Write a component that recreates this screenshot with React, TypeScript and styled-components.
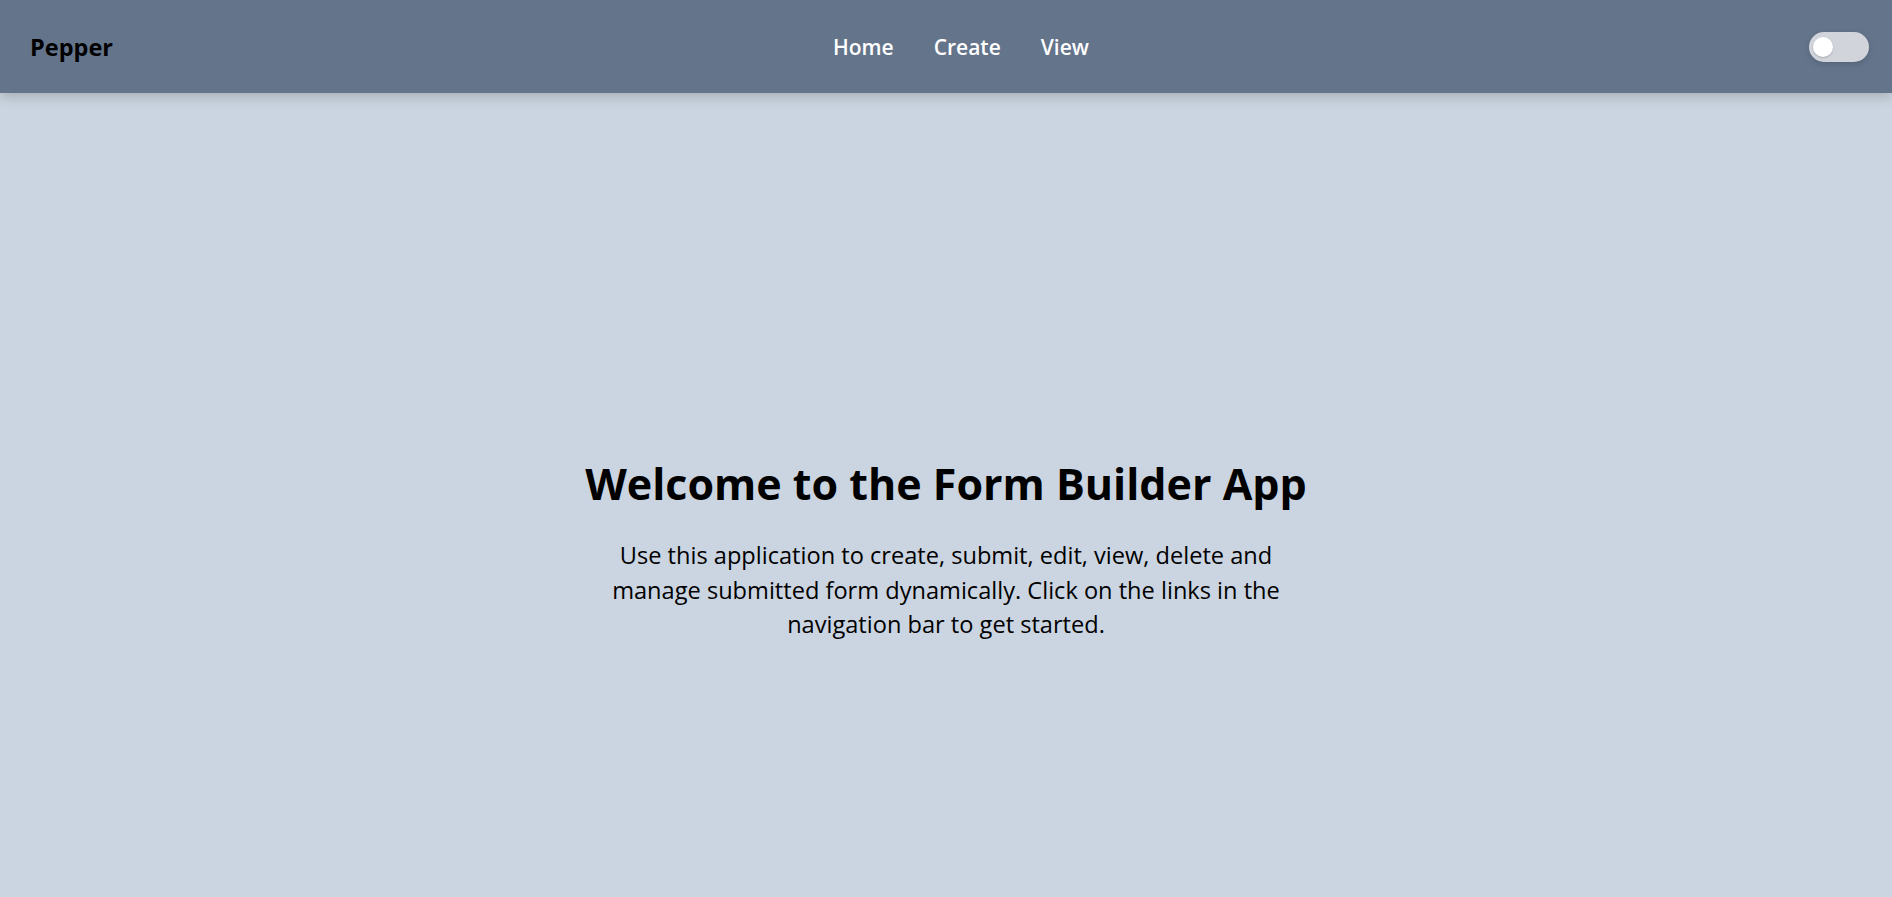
import React, { useState } from "react";
import styled, { createGlobalStyle } from "styled-components";

const GlobalStyle = createGlobalStyle`
  * { box-sizing: border-box; }
  html, body { margin: 0; padding: 0; }
  body {
    background: #cbd5e1;
    font-family: "Segoe UI", "Open Sans", "Noto Sans", sans-serif;
    color: #000;
  }
`;

const Header = styled.header`
  position: relative;
  z-index: 2;
  height: 93px;
  background: #64748b;
  display: flex;
  align-items: center;
  justify-content: space-between;
  padding: 0 23px 0 30px;
  box-shadow: 0 4px 12px rgba(0, 0, 0, 0.18);
`;

const Brand = styled.div`
  font-size: 23.5px;
  font-weight: 700;
  color: #000;
`;

const Nav = styled.nav`
  display: flex;
  gap: 40px;
`;

const NavLink = styled.a`
  font-size: 21px;
  font-weight: 600;
  color: #fff;
  text-decoration: none;
  cursor: pointer;
`;

const Track = styled.button<{ $on: boolean }>`
  width: 60px;
  height: 30px;
  border: none;
  border-radius: 15px;
  padding: 5px 4px;
  background: ${(p) => (p.$on ? "#334155" : "#d1d5db")};
  box-shadow: 0 2px 6px rgba(0, 0, 0, 0.15);
  display: flex;
  justify-content: ${(p) => (p.$on ? "flex-end" : "flex-start")};
  cursor: pointer;
`;

const Knob = styled.span`
  width: 20px;
  height: 20px;
  border-radius: 50%;
  background: #fff;
  box-shadow: 0 1px 2px rgba(0, 0, 0, 0.2);
`;

const Main = styled.main`
  min-height: 100vh;
  padding-top: 15px;
  display: flex;
  flex-direction: column;
  align-items: center;
  justify-content: center;
  text-align: center;
`;

const Title = styled.h1`
  margin: 0 0 27px;
  font-size: 43px;
  line-height: 55px;
  font-weight: 700;
`;

const Lead = styled.p`
  margin: 0;
  max-width: 705px;
  font-size: 23.6px;
  line-height: 34.5px;
  font-weight: 400;
`;

export default function App() {
  const [on, setOn] = useState(false);
  return (
    <>
      <GlobalStyle />
      <Header>
        <Brand>Pepper</Brand>
        <Nav>
          <NavLink>Home</NavLink>
          <NavLink>Create</NavLink>
          <NavLink>View</NavLink>
        </Nav>
        <Track $on={on} onClick={() => setOn(!on)} aria-label="Toggle theme">
          <Knob />
        </Track>
      </Header>
      <Main>
        <Title>Welcome to the Form Builder App</Title>
        <Lead>
          Use this application to create, submit, edit, view, delete and manage
          submitted form dynamically. Click on the links in the navigation bar to
          get started.
        </Lead>
      </Main>
    </>
  );
}
